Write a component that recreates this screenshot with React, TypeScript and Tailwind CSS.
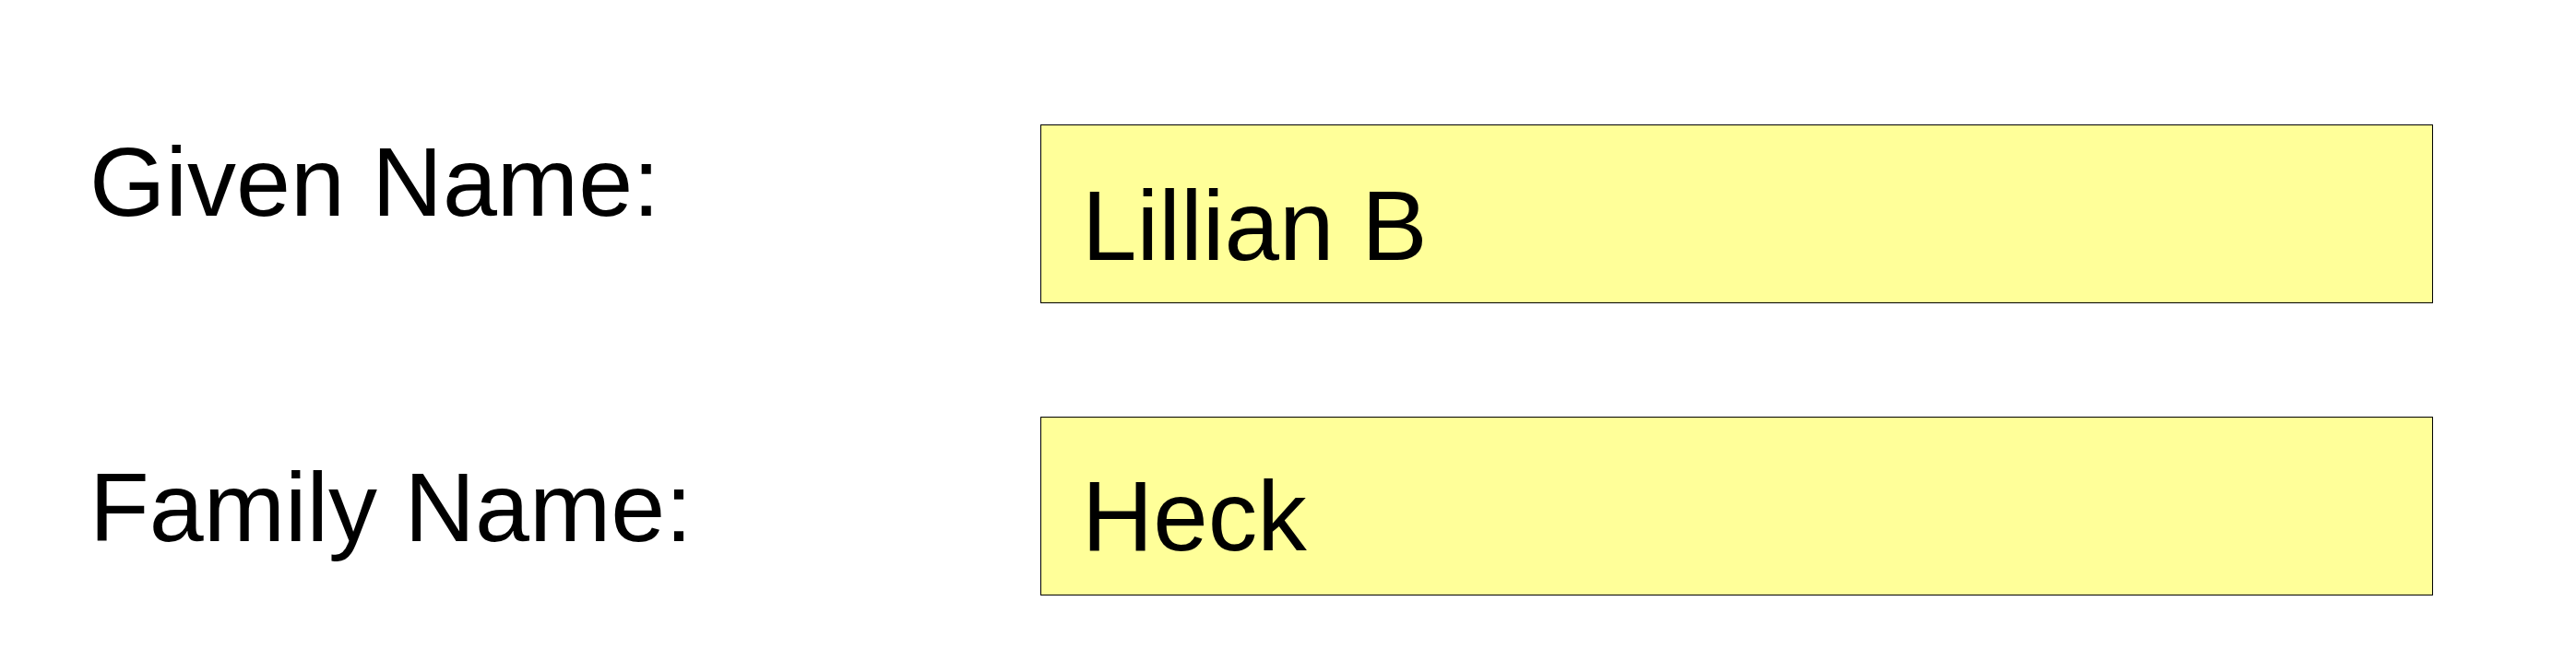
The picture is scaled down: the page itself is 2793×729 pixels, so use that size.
export default function App() {
  const rows = [
    { label: "Given Name:", value: "Lillian B", labelTop: "mt-[9px]", valueTop: "pt-[56px]" },
    { label: "Family Name:", value: "Heck", labelTop: "mt-[45px]", valueTop: "pt-[54px]" },
  ];

  return (
    <div className="w-[2793px] h-[729px] bg-white text-black font-['Liberation_Sans',Arial,sans-serif] overflow-hidden">
      <div className="pt-[135px] pl-[97px] flex flex-col gap-[123px]">
        {rows.map((r) => (
          <div key={r.label} className="flex items-start">
            <div className={`w-[1031px] text-[106px] leading-none ${r.labelTop}`}>
              {r.label}
            </div>
            <div
              className={`w-[1510px] h-[194px] border border-black bg-[#ffff99] pl-[44px] text-[107px] leading-none ${r.valueTop}`}
            >
              {r.value}
            </div>
          </div>
        ))}
      </div>
    </div>
  );
}
